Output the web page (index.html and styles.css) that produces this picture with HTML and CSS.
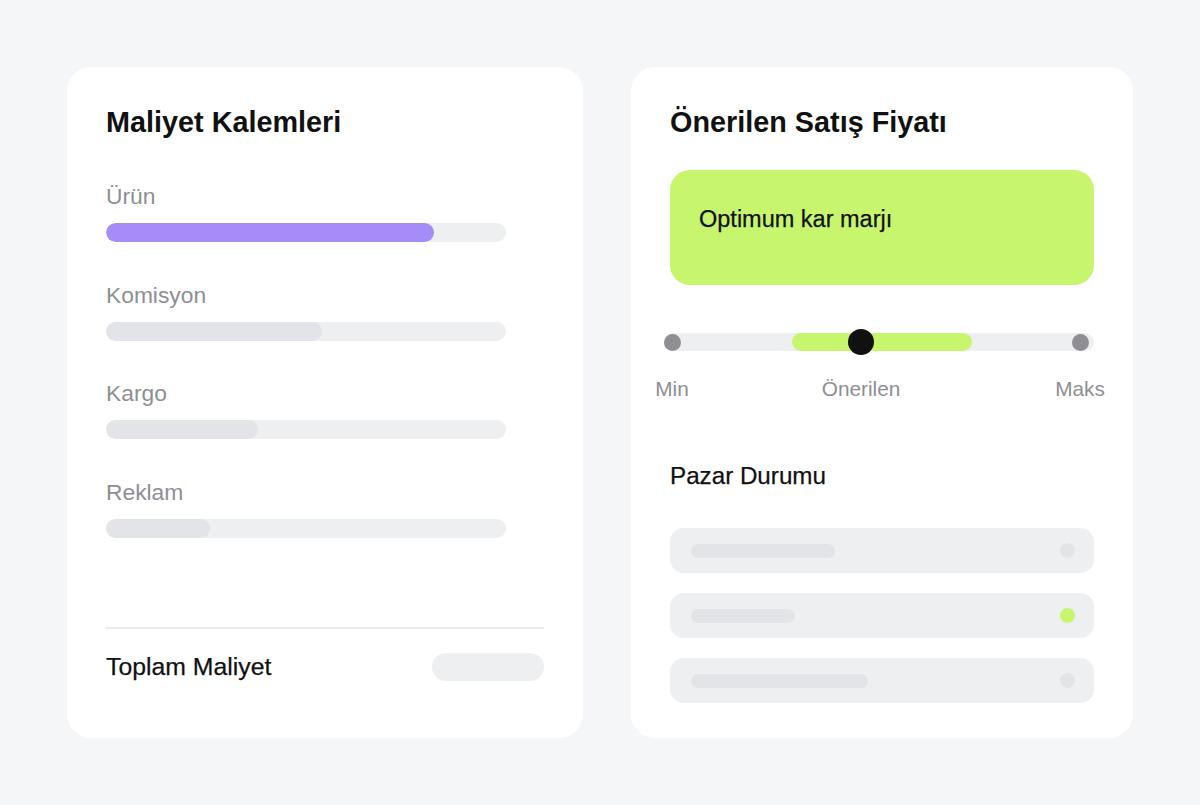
FILE: index.html
```html
<!DOCTYPE html>
<html lang="tr">
<head>
<meta charset="utf-8">
<title>Fiyat</title>
<link rel="stylesheet" href="styles.css">
</head>
<body>
<main class="page">
  <section class="card card-left">
    <h2 class="card-title">Maliyet Kalemleri</h2>
    <div class="cost-list">
      <div class="cost-item">
        <div class="cost-label">Ürün</div>
        <div class="bar"><div class="bar-fill purple" style="width:82%"></div></div>
      </div>
      <div class="cost-item">
        <div class="cost-label">Komisyon</div>
        <div class="bar"><div class="bar-fill" style="width:54%"></div></div>
      </div>
      <div class="cost-item">
        <div class="cost-label">Kargo</div>
        <div class="bar"><div class="bar-fill" style="width:38%"></div></div>
      </div>
      <div class="cost-item">
        <div class="cost-label">Reklam</div>
        <div class="bar"><div class="bar-fill" style="width:26%"></div></div>
      </div>
    </div>
    <div class="total">
      <span class="total-label">Toplam Maliyet</span>
      <span class="total-pill"></span>
    </div>
  </section>

  <section class="card card-right">
    <h2 class="card-title">Önerilen Satış Fiyatı</h2>
    <div class="highlight">Optimum kar marjı</div>
    <div class="slider">
      <div class="track">
        <span class="range"></span>
        <span class="dot dot-min"></span>
        <span class="knob"></span>
        <span class="dot dot-max"></span>
      </div>
      <div class="slider-labels">
        <span class="tick tick-min"><span>Min</span></span>
        <span class="tick tick-mid"><span>Önerilen</span></span>
        <span class="tick tick-max"><span>Maks</span></span>
      </div>
    </div>
    <h3 class="sub-title">Pazar Durumu</h3>
    <div class="market">
      <div class="market-row"><span class="market-line" style="width:144px"></span><span class="market-dot"></span></div>
      <div class="market-row"><span class="market-line" style="width:104px"></span><span class="market-dot active"></span></div>
      <div class="market-row"><span class="market-line" style="width:177px"></span><span class="market-dot"></span></div>
    </div>
  </section>
</main>
</body>
</html>
```

FILE: styles.css
```css
* { box-sizing: border-box; }
html, body { margin: 0; padding: 0; }
body {
  background: #f5f6f8;
  font-family: "Liberation Sans", Arial, sans-serif;
  color: #111;
  width: 1200px;
  height: 805px;
  overflow: hidden;
}
.page {
  display: flex;
  gap: 48px;
  padding: 67px 0 0 67px;
  align-items: flex-start;
}
.card {
  background: #fff;
  border-radius: 24px;
  height: 671px;
  padding: 38px 39px 0 39px;
  display: flex;
  flex-direction: column;
}
.card-left { width: 516px; }
.card-right { width: 502px; }
.card-title {
  margin: 0;
  font-size: 28.8px;
  line-height: 34px;
  font-weight: 700;
  color: #111;
}
.cost-list {
  margin-top: 43px;
  display: flex;
  flex-direction: column;
  gap: 38.6px;
}
.cost-label {
  font-size: 22.8px;
  line-height: 28px;
  color: #8e8e93;
  height: 28px;
}
.bar {
  margin-top: 13px;
  width: 400px;
  height: 19px;
  border-radius: 10px;
  background: #eeeff1;
  overflow: hidden;
}
.bar-fill {
  height: 100%;
  border-radius: 10px;
  background: #e3e4e7;
}
.bar-fill.purple { background: #a68cf7; }
.total {
  margin-top: auto;
  margin-bottom: 56px;
  border-top: 2px solid #ebebee;
  padding-top: 23px;
  display: flex;
  justify-content: space-between;
  align-items: center;
}
.total-label {
  font-size: 24.8px;
  line-height: 30px;
  font-weight: 500;
  color: #111;
  -webkit-text-stroke: 0.25px #111;
}
.total-pill {
  width: 112px;
  height: 28px;
  border-radius: 14px;
  background: #eeeff1;
}
.highlight {
  margin-top: 31px;
  height: 115px;
  background: #c8f56e;
  border-radius: 20px;
  padding: 35px 29px 0;
  font-size: 23.5px;
  line-height: 28px;
  color: #111;
  -webkit-text-stroke: 0.25px #111;
}
.slider {
  margin-top: 48px;
  margin-left: -6px;
}
.track {
  position: relative;
  height: 18px;
  border-radius: 9px;
  background: #eeeff1;
}
.range {
  position: absolute;
  left: 128px;
  width: 180px;
  top: 0;
  height: 18px;
  border-radius: 9px;
  background: #c8f56e;
}
.dot {
  position: absolute;
  top: 0.5px;
  width: 17px;
  height: 17px;
  border-radius: 50%;
  background: #8e8e93;
}
.dot-min { left: -0.5px; }
.dot-max { left: 407.5px; }
.knob {
  position: absolute;
  left: 184px;
  top: -4px;
  width: 26px;
  height: 26px;
  border-radius: 50%;
  background: #111;
}
.slider-labels {
  margin-top: 25px;
  display: flex;
  font-size: 20.8px;
  line-height: 26px;
  color: #8e8e93;
}
.tick {
  width: 0;
  display: flex;
  justify-content: center;
  white-space: nowrap;
}
.tick-min { margin-left: 8px; }
.tick-mid { margin-left: 189px; }
.tick-max { margin-left: 219px; }
.sub-title {
  margin: 60px 0 0;
  font-size: 24.2px;
  line-height: 28px;
  font-weight: 500;
  color: #111;
  -webkit-text-stroke: 0.25px #111;
}
.market {
  margin-top: 38px;
  display: flex;
  flex-direction: column;
  gap: 20px;
}
.market-row {
  height: 45px;
  border-radius: 14px;
  background: #eeeff1;
  display: flex;
  align-items: center;
  justify-content: space-between;
  padding: 0 19px 0 21px;
}
.market-line {
  height: 14px;
  border-radius: 7px;
  background: #e3e4e7;
}
.market-dot {
  width: 15px;
  height: 15px;
  border-radius: 50%;
  background: #e3e4e7;
}
.market-dot.active { background: #c8f56e; }
```
